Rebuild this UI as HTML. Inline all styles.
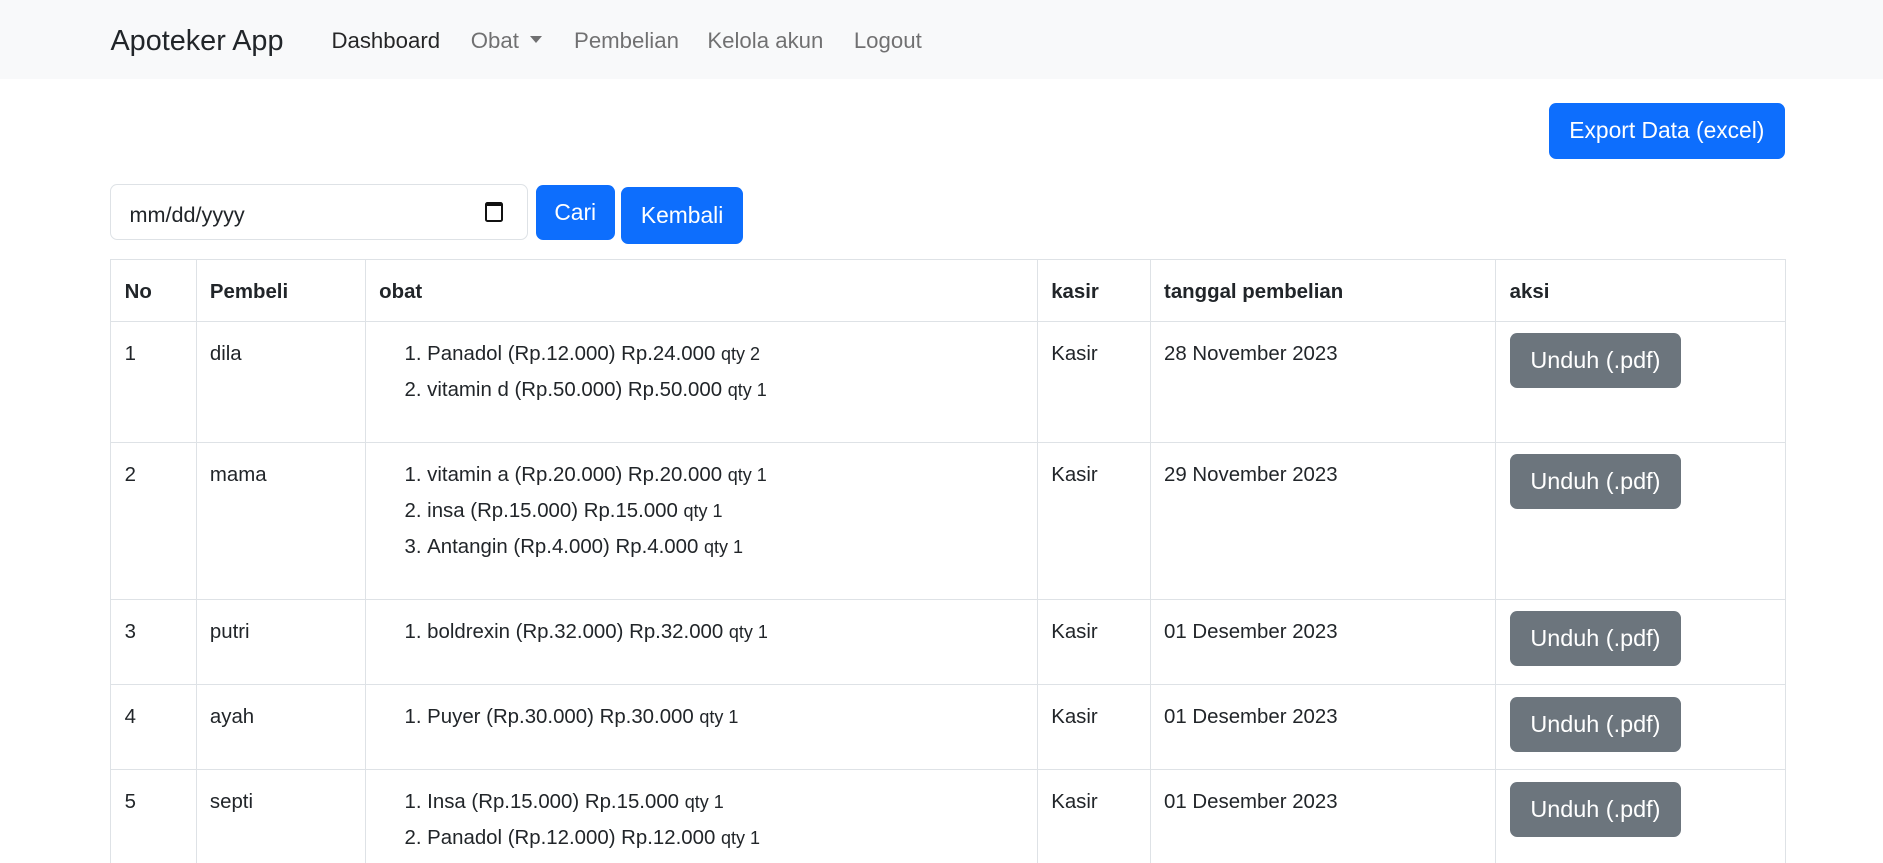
<!DOCTYPE html>
<html><head><meta charset="utf-8"><style>
*{box-sizing:border-box;margin:0;padding:0}
html,body{width:1883px;height:863px;overflow:hidden;background:#fff}
#w{zoom:1.2009;width:1568px;height:719px;position:relative;font-family:"Liberation Sans",sans-serif;color:#212529;font-size:16px}
.nav{position:absolute;left:0;top:0;width:1568px;height:66px;background:#f8f9fa}
.nav span{position:absolute;top:23px;font-size:18.5px;color:rgba(0,0,0,.55);white-space:nowrap}
.brand{left:92px;top:21px!important;font-size:24px!important;color:#212529!important}
.btn{position:absolute;color:#fff;border-radius:6px;display:flex;align-items:center;justify-content:center;white-space:nowrap}
.blue{background:#0d6efd}
.grey{background:#6c757d;font-size:19.5px;width:143px;height:46px;left:1257px}
.date{position:absolute;left:92px;top:153px;width:348px;height:47px;border:1px solid #dee2e6;border-radius:6px;font-size:18px;padding:14px 15px}
.cal{position:absolute;right:20px;top:14px;width:15px;height:17px;border:2px solid #111;border-top-width:4px;border-radius:2px}
table{position:absolute;left:92px;top:216px;border-collapse:collapse;width:1395px}
td,th{border:1px solid #dee2e6;vertical-align:top;text-align:left;padding:12px 10px 0 11px;font-size:17px;line-height:30px}
th{height:51px;padding-top:11px;font-weight:bold}
ol{padding-left:40px;margin-bottom:28px}
li{line-height:30px;height:30px}
small{font-size:15px}
</style></head><body><div id="w">
<div class="nav">
<span class="brand">Apoteker App</span>
<span style="left:276px;color:rgba(0,0,0,.85)">Dashboard</span>
<span style="left:392px">Obat <span style="position:relative;top:-4px;left:4px;display:inline-block;border:5px solid transparent;border-top:6px solid rgba(0,0,0,.55);border-bottom:0"></span></span>
<span style="left:478px">Pembelian</span>
<span style="left:589px">Kelola akun</span>
<span style="left:711px">Logout</span>
</div>
<div class="btn blue" style="left:1290px;top:86px;width:196px;height:46px;font-size:19px">Export Data (excel)</div>
<div class="date">mm/dd/yyyy<div class="cal"></div></div>
<div class="btn blue" style="left:446px;top:154px;width:66px;height:46px;font-size:19px">Cari</div>
<div class="btn blue" style="left:517px;top:156px;width:102px;height:47px;font-size:19px">Kembali</div>
<table>
<colgroup><col style="width:71px"><col style="width:141px"><col style="width:560px"><col style="width:94px"><col style="width:288px"><col style="width:241px"></colgroup>
<tr><th>No</th><th>Pembeli</th><th>obat</th><th>kasir</th><th>tanggal pembelian</th><th>aksi</th></tr>
<tr><td>1</td><td>dila</td><td><ol><li>Panadol (Rp.12.000) Rp.24.000 <small>qty 2</small></li><li>vitamin d (Rp.50.000) Rp.50.000 <small>qty 1</small></li></ol></td><td>Kasir</td><td>28 November 2023</td><td></td></tr>
<tr><td>2</td><td>mama</td><td><ol><li>vitamin a (Rp.20.000) Rp.20.000 <small>qty 1</small></li><li>insa (Rp.15.000) Rp.15.000 <small>qty 1</small></li><li>Antangin (Rp.4.000) Rp.4.000 <small>qty 1</small></li></ol></td><td>Kasir</td><td>29 November 2023</td><td></td></tr>
<tr><td>3</td><td>putri</td><td><ol><li>boldrexin (Rp.32.000) Rp.32.000 <small>qty 1</small></li></ol></td><td>Kasir</td><td>01 Desember 2023</td><td></td></tr>
<tr><td>4</td><td>ayah</td><td><ol><li>Puyer (Rp.30.000) Rp.30.000 <small>qty 1</small></li></ol></td><td>Kasir</td><td>01 Desember 2023</td><td></td></tr>
<tr><td>5</td><td>septi</td><td><ol><li>Insa (Rp.15.000) Rp.15.000 <small>qty 1</small></li><li>Panadol (Rp.12.000) Rp.12.000 <small>qty 1</small></li></ol></td><td>Kasir</td><td>01 Desember 2023</td><td></td></tr>
</table>
<div class="btn grey" style="top:277px">Unduh (.pdf)</div>
<div class="btn grey" style="top:378px">Unduh (.pdf)</div>
<div class="btn grey" style="top:509px">Unduh (.pdf)</div>
<div class="btn grey" style="top:580px">Unduh (.pdf)</div>
<div class="btn grey" style="top:651px">Unduh (.pdf)</div>
</div></body></html>
